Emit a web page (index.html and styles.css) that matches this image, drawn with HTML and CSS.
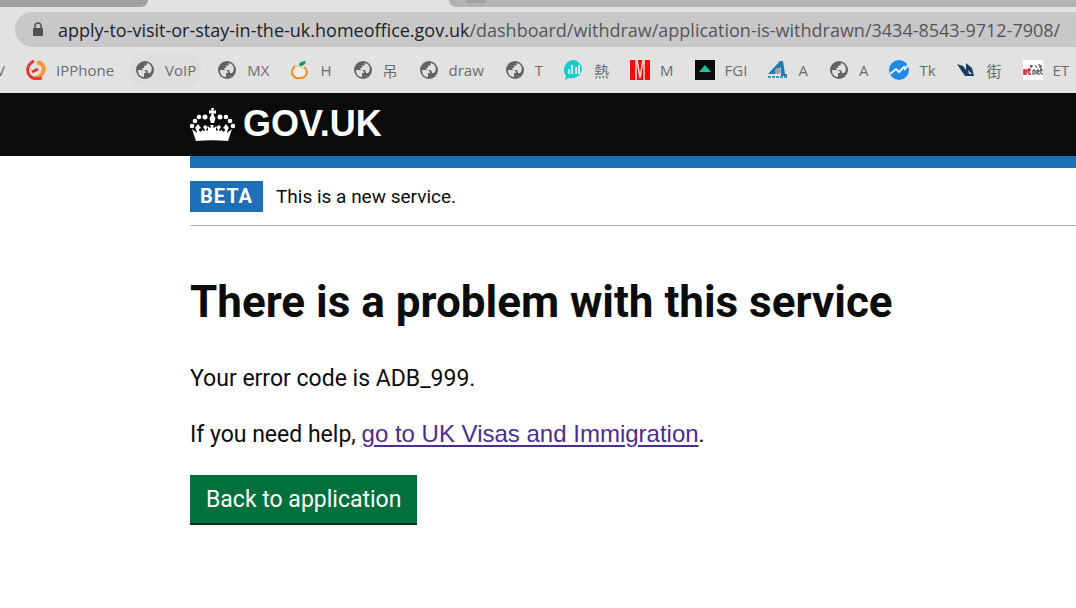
FILE: index.html
```html
<!DOCTYPE html>
<html lang="en">
<head>
  <meta charset="UTF-8" />
  <meta name="viewport" content="width=device-width, initial-scale=1.0"/>
  <title>There is a problem with this service</title>
  <link rel="stylesheet" href="styles.css">
</head>
<body>
  <svg class="defs" aria-hidden="true">
    <symbol id="globe" viewBox="0 0 20 20">
      <circle cx="10" cy="10" r="9" fill="#616467"/>
      <path d="M3 10h5c2 0 3 1 3 3H9v4c-4 0-6-3-6-7zM12 3c0 2-1 3-3 3v2H7c0 1 1 2 2 2h2c1 0 2 1 2 3 2 0 2 0 3-1 2-4 0-8-4-9z" fill="#e2e2e2"/>
    </symbol>
  </svg>

  <div class="browser">
    <div class="tabs">
      <div class="tab tab-left"></div>
      <div class="tab tab-right"><span></span></div>
    </div>
    <div class="address">
      <svg class="lock" viewBox="0 0 12 16" aria-hidden="true">
        <path d="M3 7V4a3 3 0 0 1 6 0v3" fill="none" stroke="#505154" stroke-width="1.5"/>
        <rect x="1" y="6" width="10" height="8" rx="1" fill="#505154"/>
      </svg>
      <p class="url">apply-to-visit-or-stay-in-the-uk.homeoffice.gov.uk<span>/dashboard/withdraw/application-is-withdrawn/3434-8543-9712-7908/</span></p>
    </div>
    <nav class="bookmarks" aria-label="Bookmarks">
      <a href="#" class="cut">V</a>
      <a href="#">
        <svg viewBox="0 0 20 20" aria-hidden="true">
          <path d="M11 3c6-1 9 6 5 11-2 3-5 4-7 3" fill="none" stroke="#f59a35" stroke-width="4"/>
          <path d="M8 1C1 4 0 12 4 16c3 4 8 3 12 2M6 12l6-3" fill="none" stroke="#e4392f" stroke-width="3"/>
        </svg>IPPhone</a>
      <a href="#" class="active"><svg aria-hidden="true"><use href="#globe"/></svg>VoIP</a>
      <a href="#"><svg aria-hidden="true"><use href="#globe"/></svg>MX</a>
      <a href="#">
        <svg viewBox="0 0 20 20" aria-hidden="true">
          <path d="M5 6c-7 8 0 13 5 12 7 0 9-7 4-11" fill="#f3eee4" stroke="#ee8b2c" stroke-width="2"/>
          <path d="M5 6l3 1 2-1 2 2 3-1" fill="none" stroke="#f2b67b"/>
          <path d="M9 5c0-3 4-4 7-4-1 4-3 5-6 5z" fill="#17995a"/>
        </svg>H</a>
      <a href="#"><svg aria-hidden="true"><use href="#globe"/></svg>吊</a>
      <a href="#"><svg aria-hidden="true"><use href="#globe"/></svg>draw</a>
      <a href="#"><svg aria-hidden="true"><use href="#globe"/></svg>T</a>
      <a href="#">
        <svg viewBox="0 0 20 20" aria-hidden="true">
          <path d="M10 0a10 9 0 1 1-5 18l-4 2 1-4A10 10 0 0 1 10 0z" fill="#12cdcb"/>
          <path d="M5 9v5M8 5v9M12 7v7M15 5v9" stroke="#d9f5f3" stroke-width="2"/>
        </svg>熱</a>
      <a href="#">
        <svg viewBox="0 0 20 20" aria-hidden="true">
          <rect width="20" height="20" fill="#f70a0a"/>
          <path d="M6 0v20M14 0v20M7 0l3 18 3-18" fill="none" stroke="#f4dede" stroke-width="1.5"/>
        </svg>M</a>
      <a href="#">
        <svg viewBox="0 0 20 20" aria-hidden="true">
          <rect width="20" height="20" fill="#0b0b0b"/>
          <path d="M4 12l6-7 6 7z" fill="#14c8a0"/>
        </svg>FGI</a>
      <a href="#">
        <svg viewBox="0 0 20 20" aria-hidden="true">
          <path d="M0 14L12 1h3l2 13h2v2h-6V7l-6 7z" fill="#1681ae"/>
          <circle cx="10" cy="11" r="3" fill="#9ba7ad"/>
          <path d="M0 17h20" stroke="#4597b7" stroke-width="2" stroke-dasharray="3 1"/>
        </svg>A</a>
      <a href="#"><svg aria-hidden="true"><use href="#globe"/></svg>A</a>
      <a href="#">
        <svg viewBox="0 0 20 20" aria-hidden="true">
          <circle cx="10" cy="10" r="10" fill="#1e88e5"/>
          <path d="M1 14l6-5 3 3 5-5 1 2 3-4" fill="none" stroke="#e6f2fb" stroke-width="2"/>
        </svg>Tk</a>
      <a href="#">
        <svg viewBox="0 0 20 20" aria-hidden="true">
          <path d="M0 4l6 2 3 4V3l6 5 2 8H8z" fill="#153d65"/>
          <path d="M11 10l4 4h-3z" fill="#e2e2e2"/>
        </svg>街</a>
      <a href="#">
        <svg viewBox="0 0 20 20" aria-hidden="true">
          <rect width="20" height="20" fill="#fff"/>
          <path d="M4 14H1v-4h3v2H1M6 8v6h2M5 10h3" fill="none" stroke="#cf1f35" stroke-width="1.5"/>
          <path d="M10 15v-5h2v5M17 14h-3v-4h2v2h-2M18 8v6h2M17 10h3" fill="none" stroke="#333"/>
          <path d="M7 6h3M8 5v3M12 5l2 3M15 5h2v3M18 5v3" fill="none" stroke="#333"/>
        </svg>ET</a>
    </nav>
  </div>

  <header class="header">
    <a href="#" class="logo">
      <svg class="crown" viewBox="0 0 45 33" aria-hidden="true">
        <g fill="#fff">
          <circle cx="2" cy="18" r="2.3"/><circle cx="5" cy="13" r="2.3"/><circle cx="9" cy="9" r="2.3"/><circle cx="15" cy="9" r="2.5"/>
          <circle cx="43" cy="18" r="2.3"/><circle cx="40" cy="13" r="2.3"/><circle cx="36" cy="9" r="2.3"/><circle cx="30" cy="9" r="2.5"/>
          <path d="M21 0h3l-.5 3L26 2v4l-2.5-1 .5 3c1 1 2 2 1 4l-1 3h-3l-1-3c-1-2 0-3 1-4l.5-3L19 6V2l2.5 1z"/>
          <path d="M2 21l5 4c0-2-1-3-1-4l-1-1 3-4 3 4-2 1c0 3 2 4 3 1l2 1 1-1-2-3 2-2 3 2-2 3 1 1 1-1v-4l2 2 1-1-1-2h4l-1 2 1 1 2-2v4l1 1 1-1-2-3 3-2 2 2-2 3 1 1 2-1c1 3 3 2 3-1l-2-1 3-4 3 4-1 1c0 1-1 2-1 4l5-4-4 12C28 32 17 32 6 33z"/>
        </g>
      </svg>
      GOV.UK
    </a>
  </header>

  <div class="container">
    <div class="phase">
      <strong class="tag">BETA</strong>
      <span>This is a new service.</span>
    </div>
    <main>
      <h1>There is a problem with this service</h1>
      <p>Your error code is ADB_999.</p>
      <p>If you need help, <a href="#">go to UK Visas and Immigration</a>.</p>
      <button type="button" class="btn">Back to application</button>
    </main>
  </div>
</body>
</html>
```
FILE: styles.css
```css
* {
  margin: 0;
  padding: 0;
  box-sizing: border-box;
}
body {
  background: #fff;
  color: #0b0c0c;
  font-family: Roboto, Arial, sans-serif;
  overflow-x: hidden;
}
.defs {
  display: none;
}

/* browser bar */
.browser {
  background: #e2e2e2;
  font-family: "Open Sans", "Noto Sans CJK TC", sans-serif;
  overflow: hidden;
}
.tabs {
  display: flex;
  justify-content: space-between;
  height: 7px;
}
.tab-left {
  width: 148px;
  background: #a1a1a1;
  border-bottom-right-radius: 8px;
}
.tab-right {
  width: calc(100% - 449px);
  padding-left: 17px;
  background: #b2b2b2;
  border-bottom-left-radius: 8px;
}
.tab-right span {
  display: block;
  width: 20px;
  height: 3px;
  background: #a1a1a1;
  border-radius: 0 0 10px 10px;
}
.address {
  display: flex;
  align-items: center;
  gap: 14px;
  height: 35px;
  margin: 5px 0 0 15px;
  padding-left: 17px;
  background: #c8c8ca;
  border-radius: 18px 0 0 18px;
}
.lock {
  flex: none;
  width: 12px;
  height: 16px;
}
.url {
  font-size: 18px;
  line-height: 24px;
  white-space: nowrap;
  color: #222326;
}
.url span {
  color: #555659;
}
.bookmarks {
  display: flex;
  align-items: center;
  gap: 21px;
  height: 46px;
}
.bookmarks a {
  display: flex;
  align-items: center;
  gap: 10px;
  flex: none;
  height: 34px;
  color: #6b6c6f;
  font-size: 15px;
  text-decoration: none;
}
.bookmarks svg {
  width: 20px;
  height: 20px;
}
.bookmarks .cut {
  justify-content: flex-end;
  width: 5px;
}
.bookmarks .active {
  height: 26px;
  background: #dedede;
  border-radius: 13px;
  box-shadow: 0 0 0 5px #dedede;
}

/* header */
.header {
  height: 63px;
  padding-left: 190px;
  background: #0b0b0b;
}
.logo {
  display: flex;
  align-items: center;
  gap: 8px;
  height: 62px;
  color: #fff;
  font: bold 36px "Liberation Sans", Arial, sans-serif;
  text-decoration: none;
}
.crown {
  width: 45px;
  height: 33px;
}

/* page */
.container {
  margin-left: 190px;
  border-top: 12px solid #1d70b8;
}
.phase {
  display: flex;
  align-items: center;
  gap: 13px;
  height: 58px;
  border-bottom: 1px solid #b1b4b6;
  font-size: 19px;
}
.tag {
  padding: 0 10px;
  background: #1d70b8;
  color: #fff;
  font-size: 20px;
  line-height: 31px;
  letter-spacing: 1px;
}
main {
  padding-top: 50px;
}
h1 {
  margin-bottom: 35px;
  font-size: 44px;
  line-height: 52px;
}
main p {
  margin-bottom: 24px;
  font-size: 23px;
  line-height: 32px;
}
main p a {
  color: #4c2c92;
  font-family: "Liberation Sans", Arial, sans-serif;
  font-size: 24px;
  line-height: 24px;
  text-underline-offset: 3px;
}
.btn {
  height: 50px;
  padding: 0 16px;
  background: #00703c;
  color: #fff;
  border: none;
  border-bottom: 2px solid #002d18;
  font-family: inherit;
  font-size: 23px;
  cursor: pointer;
}
```
